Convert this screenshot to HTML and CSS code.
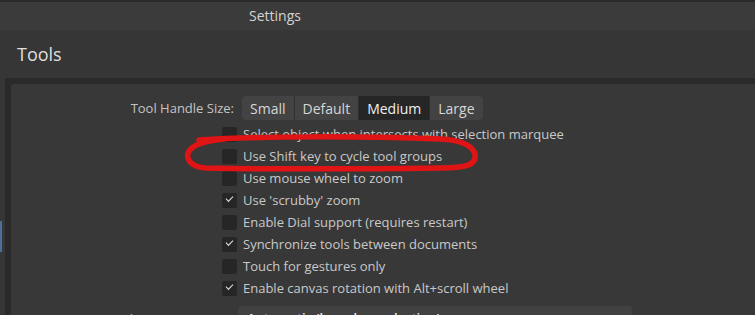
FILE: index.html
```html
<!DOCTYPE html>
<html lang="en">
  <head>
    <meta charset="UTF-8" />
    <meta name="viewport" content="width=device-width, initial-scale=1.0" />
    <title>Settings - Tools</title>
    <link rel="stylesheet" href="styles.css">
  </head>
  <body>
    <div class="titlebar">Settings</div>

    <div class="page">
      <h1 class="page-title">Tools</h1>

      <div class="frame">
        <div class="panel">
          <div class="field">
            <span class="field-label">Tool Handle Size:</span>
            <div class="segments">
              <button class="segment">Small</button>
              <button class="segment">Default</button>
              <button class="segment active">Medium</button>
              <button class="segment">Large</button>
            </div>
          </div>

          <ul class="options">
            <li class="option"><span class="check"></span>Select object when intersects with selection marquee</li>
            <li class="option"><span class="check"></span>Use Shift key to cycle tool groups</li>
            <li class="option"><span class="check"></span>Use mouse wheel to zoom</li>
            <li class="option"><span class="check checked"></span>Use 'scrubby' zoom</li>
            <li class="option"><span class="check"></span>Enable Dial support (requires restart)</li>
            <li class="option"><span class="check checked"></span>Synchronize tools between documents</li>
            <li class="option"><span class="check"></span>Touch for gestures only</li>
            <li class="option"><span class="check checked"></span>Enable canvas rotation with Alt+scroll wheel</li>
          </ul>

          <div class="field field-select">
            <span class="field-label">Move Tool Layout Strategy:</span>
            <div class="select">Automatic (based on selection)<span class="chevron"></span></div>
          </div>
        </div>
      </div>
    </div>

    <div class="side-marker"></div>

    <!-- hand-drawn annotation -->
    <svg class="scribble" width="755" height="315" viewBox="0 0 755 315">
      <path d="M199 140 C 260 136, 360 136, 440 139 C 460 140, 472 145, 475 154 C 477 165, 466 168, 440 168 C 360 169, 260 169, 205 168 C 192 167, 186 160, 188 153 C 191 145, 203 141, 225 139"
            fill="none" stroke="#e01414" stroke-width="5.5" stroke-linecap="round" />
    </svg>
  </body>
</html>
```

FILE: styles.css
```css
* {
  box-sizing: border-box;
}
body {
  margin: 0;
  background-color: #363636;
  font-family: 'Open Sans', 'Noto Sans', sans-serif;
  color: #c9c9c9;
  overflow: hidden;
  height: 315px;
  position: relative;
}
/* Window title */
.titlebar {
  height: 30px;
  border-top: 2px solid #2a2a2a;
  background-color: #3b3b3b;
  padding-left: 249px;
  font-size: 14px;
  line-height: 27px;
  color: #d4d4d4;
}
.page-title {
  margin: 0;
  height: 48px;
  padding: 12px 0 0 17px;
  font-size: 18px;
  font-weight: normal;
  line-height: 24px;
  color: #dedede;
}
/* Settings panel */
.frame {
  margin-left: 5px;
  padding: 6px 0 0 6px;
  background-color: #2a2a2a;
  height: 237px;
}
.panel {
  height: 100%;
  background-color: #383838;
  border-top-left-radius: 3px;
  padding-top: 12px;
  font-size: 13px;
}
.field {
  display: flex;
  align-items: center;
  gap: 8px;
}
.field-label {
  width: 223px;
  text-align: right;
  color: #c4c4c4;
}
.segments {
  display: flex;
  gap: 1px;
  background-color: #2f2f2f;
  border-radius: 3px;
}
.segment {
  height: 24px;
  padding: 0 8px;
  border: none;
  background-color: #434343;
  color: #d6d6d6;
  font-family: inherit;
  font-size: 14px;
}
.segment:first-child {
  border-radius: 3px 0 0 3px;
}
.segment:last-child {
  border-radius: 0 3px 3px 0;
}
.segment.active {
  background-color: #262626;
  color: #f0f0f0;
}
/* Checkbox list */
.options {
  list-style: none;
  margin: 3px 0 0;
  padding: 0 0 0 211px;
}
.option {
  display: flex;
  align-items: center;
  gap: 6px;
  height: 22px;
}
.check {
  width: 15px;
  height: 15px;
  border-radius: 2px;
  background-color: #262626;
  position: relative;
}
.check.checked::after {
  content: '';
  position: absolute;
  left: 4px;
  top: 3px;
  width: 6px;
  height: 3px;
  border-left: 1.5px solid #e8e8e8;
  border-bottom: 1.5px solid #e8e8e8;
  transform: rotate(-45deg);
}
.field-select {
  margin-top: 7px;
  align-items: flex-start;
  gap: 4px;
}
.field-select .field-label {
  padding-top: 4px;
}
.select {
  width: 394px;
  height: 25px;
  padding: 3px 9px;
  border-radius: 3px;
  background-color: #414141;
  color: #ececec;
  font-weight: 600;
  position: relative;
}
.chevron {
  position: absolute;
  right: 9px;
  top: 8px;
  width: 6px;
  height: 6px;
  border-right: 1px solid #bbb;
  border-bottom: 1px solid #bbb;
  transform: rotate(45deg);
}
.side-marker {
  position: absolute;
  left: 0;
  top: 221px;
  width: 2px;
  height: 31px;
  background-color: #4a6f9a;
}
.scribble {
  position: absolute;
  left: 0;
  top: 0;
  pointer-events: none;
}
```
